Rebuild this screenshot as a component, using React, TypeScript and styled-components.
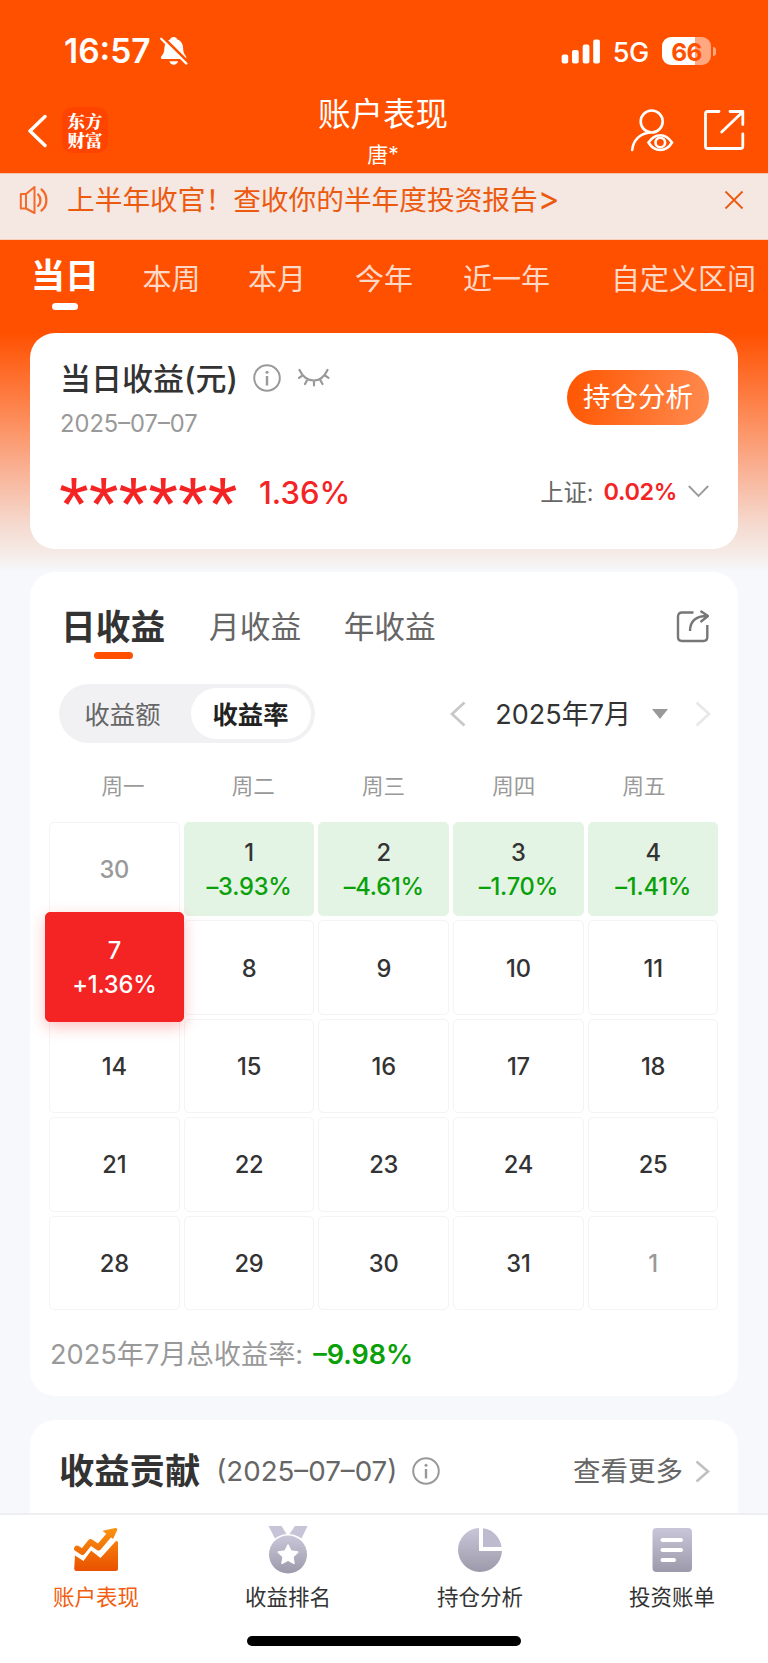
import React from 'react';
import styled, { createGlobalStyle } from 'styled-components';

const Global = createGlobalStyle`
  * { box-sizing: border-box; }
  body {
    margin: 0;
    background: #f6f8fb;
    font-family: Inter, "Noto Sans CJK SC", sans-serif;
    color: #333;
    -webkit-font-smoothing: antialiased;
  }
  svg { display: block; flex: none; }
`;

const Page = styled.div`
  width: 768px;
  height: 1663px;
  overflow: hidden;
  display: flex;
  flex-direction: column;
  background: linear-gradient(180deg, #ff5000 0, #ff5000 333px, #fd8650 410px, #f9b194 470px, #f5dacf 525px, #f5efed 560px, #f6f8fb 571px);
`;

const Label = styled.span<{ $size: number; $weight?: number; $color?: string; $spacing?: number }>`
  display: block;
  padding-top: 2px;
  font-size: ${p => p.$size}px;
  font-weight: ${p => p.$weight ?? 400};
  color: ${p => p.$color ?? 'inherit'};
  letter-spacing: ${p => p.$spacing ?? 0}px;
  line-height: 1;
  white-space: nowrap;
`;

const StatusBar = styled.div`
  height: 100px;
  padding: 2px 52px 0 64px;
  display: flex;
  align-items: center;
  color: #fff;
  flex: none;
`;
const BellOff = styled.svg`
  margin-left: 9px;
`;
const StatusRight = styled.div`
  margin-left: auto;
  display: flex;
  align-items: center;
`;
const Carrier = styled.div`
  margin: 0 13px 0 12px;
  display: flex;
`;
const Battery = styled.div`
  width: 49px;
  height: 28px;
  border-radius: 9px;
  background: linear-gradient(90deg, #fff 33px, #ffa880 33px);
  color: #ff5000;
  display: flex;
  align-items: center;
  justify-content: center;
`;
const BatteryNub = styled.div`
  width: 3px;
  height: 9px;
  margin-left: 2px;
  border-radius: 0 4px 4px 0;
  background: #ffa880;
`;

const Header = styled.header`
  height: 73px;
  display: grid;
  grid-template-columns: 1fr auto 1fr;
  color: #fff;
  flex: none;
`;
const HeaderLeft = styled.div`
  display: flex;
  gap: 15px;
  padding: 7px 0 0 27px;
  align-items: flex-start;
`;
const BackIcon = styled.svg`
  margin-top: 7px;
`;
const Logo = styled.div`
  width: 46px;
  height: 46px;
  padding: 4px 4px 0 5.5px;
  border-radius: 10px;
  background: #ff4400;
  overflow-wrap: anywhere;
  word-break: break-all;
  font: 900 17.5px/19px "Noto Serif CJK SC", "Noto Sans CJK SC", serif;
`;
const HeaderTitle = styled.div`
  display: flex;
  flex-direction: column;
  align-items: center;
  gap: 10px;
  margin: -3px 2px 0 0;
`;
const HeaderRight = styled.div`
  display: flex;
  justify-content: flex-end;
  gap: 29px;
  padding: 8px 23px 0 0;
`;

const Notice = styled.div`
  height: 66.5px;
  padding: 0 24px 13px 18px;
  display: flex;
  align-items: center;
  background: #f5e7e2;
  border-top: 1px solid #f9c5ae;
  border-bottom: 1px solid #f8cfbc;
  color: #ec5a10;
  flex: none;
`;
const NoticeText = styled.div`
  margin-left: 17px;
  flex: 1;
  display: flex;
`;
const Arrow = styled.span`
  font-size: 33px;
  line-height: 0;
`;

const Tabs = styled.nav`
  height: 93px;
  display: flex;
  align-items: flex-start;
  padding: 17px 0 0 31px;
  color: #ffd9c8;
  flex: none;
`;
const Tab = styled.div<{ $gap: number; $active?: boolean }>`
  margin-left: ${p => p.$gap}px;
  padding-top: ${p => (p.$active ? 0 : 6.5)}px;
  display: flex;
  flex-direction: column;
  align-items: center;
  gap: 10.5px;
`;
const Underline = styled.i<{ $w: number; $color: string }>`
  width: ${p => p.$w}px;
  height: 6.5px;
  border-radius: 4px;
  background: ${p => p.$color};
`;

const Card = styled.section<{ $h: number; $mt?: number; $open?: boolean }>`
  height: ${p => p.$h}px;
  margin: ${p => p.$mt ?? 0}px 30px 0;
  border-radius: ${p => (p.$open ? '25px 25px 0 0' : '25px')};
  background: #fff;
  flex: none;
`;
const Row = styled.div<{ $h: number; $pad?: string; $gap?: number }>`
  height: ${p => p.$h}px;
  padding: ${p => p.$pad ?? '0'};
  display: flex;
  align-items: center;
  gap: ${p => p.$gap ?? 0}px;
`;
const Push = styled.div<{ $gap?: number }>`
  margin-left: auto;
  display: flex;
  align-items: center;
  gap: ${p => p.$gap ?? 0}px;
`;
const SummaryTop = styled.div`
  display: flex;
  justify-content: space-between;
  padding: 27px 29px 0 30px;
`;
const TitleLine = styled.div`
  display: flex;
  align-items: center;
  height: 36px;
`;
const Slot = styled.div<{ $l: number; $r: number }>`
  display: flex;
  margin: 0 ${p => p.$r}px 0 ${p => p.$l}px;
`;
const DateLine = styled.div`
  margin-top: 14px;
  display: flex;
`;
const AnalysisButton = styled.button`
  width: 142px;
  height: 55px;
  margin-top: 10px;
  padding: 0;
  border: 0;
  border-radius: 28px;
  background: linear-gradient(100deg, #ff5500, #ff8b50);
  color: #fff;
  font-family: inherit;
`;
const Stars = styled.div`
  width: 200px;
  height: 52px;
  color: #f52424;
  font: 400 76.5px/78px "Liberation Sans", sans-serif;
`;

const CardTabs = styled.div`
  height: 112px;
  padding: 34px 29px 0 31px;
  display: flex;
  align-items: flex-start;
  color: #666;
`;
const CardTab = styled.div<{ $gap: number; $active?: boolean }>`
  margin-left: ${p => p.$gap}px;
  padding-top: ${p => (p.$active ? 2 : 3.5)}px;
  display: flex;
  flex-direction: column;
  align-items: center;
  gap: 7.5px;
`;
const Segment = styled.div`
  width: 256px;
  height: 59px;
  border-radius: 30px;
  padding: 4px;
  background: #f1f1f4;
  display: flex;
  justify-content: space-between;
`;
const SegmentItem = styled.div<{ $active?: boolean }>`
  width: 120px;
  height: 51px;
  padding-right: 1px;
  border-radius: 26px;
  background: ${p => (p.$active ? '#fff' : 'transparent')};
  color: ${p => (p.$active ? '#222' : '#666')};
  display: flex;
  align-items: center;
  justify-content: center;
`;
const Weekdays = styled.div`
  height: 79px;
  padding: 7px 29px 0 28px;
  display: grid;
  grid-template-columns: repeat(5, 1fr);
  align-items: center;
  justify-items: center;
`;
const CalendarGrid = styled.div`
  height: 488px;
  margin: 0 19.500px 0 19px;
  display: grid;
  grid-template-columns: repeat(5, 1fr);
  grid-template-rows: repeat(5, 1fr);
  gap: 4px;
`;
type Kind = 'plain' | 'muted' | 'down' | 'active';
const Cell = styled.div<{ $kind: Kind }>`
  display: flex;
  flex-direction: column;
  align-items: center;
  justify-content: center;
  gap: 10px;
  padding-top: 2px;
  border-radius: 5px;
  font-size: 23.7px;
  font-weight: 500;
  line-height: 24px;
  letter-spacing: -0.2px;
  border: 1px solid ${p => (p.$kind === 'down' ? '#e4f4e4' : '#f4f4f4')};
  background: ${p => (p.$kind === 'down' ? '#e4f4e4' : '#fff')};
  color: ${p => (p.$kind === 'muted' ? '#999' : '#333')};
  ${p =>
    p.$kind === 'active' &&
    `
    margin: -8px -4px -7px;
    position: relative;
    background: #f52424;
    border-color: #f52424;
    color: #fff;
    box-shadow: 0 5px 15px rgba(245, 36, 36, 0.28);
  `}
`;
const Rate = styled.span<{ $kind: Kind }>`
  color: ${p => (p.$kind === 'active' ? '#fff' : '#09a009')};
`;

const TabBar = styled.footer`
  height: 150px;
  border-top: 2px solid #eeeff1;
  background: #fff;
  display: flex;
  flex-direction: column;
  align-items: center;
  flex: none;
`;
const NavItems = styled.div`
  width: 100%;
  height: 121px;
  display: grid;
  grid-template-columns: repeat(4, 1fr);
`;
const NavItem = styled.div<{ $active?: boolean }>`
  display: flex;
  flex-direction: column;
  align-items: center;
  gap: 10px;
  padding-top: 10px;
  color: ${p => (p.$active ? '#f25d10' : '#333')};
`;
const HomeIndicator = styled.div`
  width: 274px;
  height: 10px;
  border-radius: 5px;
  background: #000;
`;

const Info = () => (
  <svg width="28" height="28" viewBox="0 0 28 28" fill="none" stroke="#999" strokeWidth="2">
    <circle cx="14" cy="14" r="12.8" />
    <path d="M14 12v9.5" strokeWidth="2.4" />
    <circle cx="14" cy="8.2" r="1.500" fill="#999" stroke="none" />
  </svg>
);

const Chevron = ({ w, h, color, sw, flip }: { w: number; h: number; color: string; sw: number; flip?: boolean }) => (
  <svg width={w} height={h} viewBox={`0 0 ${w} ${h}`} fill="none" stroke={color} strokeWidth={sw}>
    <path d={flip ? `M1.5 1.5L${w - 2} ${h / 2}L1.5 ${h - 1.5}` : `M${w - 1.5} 1.5L2 ${h / 2}L${w - 1.5} ${h - 1.5}`} />
  </svg>
);

const tabs: [string, number][] = [
  ['本周', 43.5],
  ['本月', 47.5],
  ['今年', 49],
  ['近一年', 50],
  ['自定义区间', 61],
];

const cells: { d: string; k?: Kind; r?: string }[] = [
  { d: '30', k: 'muted' },
  { d: '1', k: 'down', r: '–3.93%' },
  { d: '2', k: 'down', r: '–4.61%' },
  { d: '3', k: 'down', r: '–1.70%' },
  { d: '4', k: 'down', r: '–1.41%' },
  { d: '7', k: 'active', r: '+1.36%' },
  ...['8', '9', '10', '11', '14', '15', '16', '17', '18', '21', '22', '23', '24', '25', '28', '29', '30', '31'].map(d => ({ d })),
  { d: '1', k: 'muted' },
];

export default function App() {
  return (
    <Page>
      <Global />
      <StatusBar>
        <Label $size={33.5} $weight={600}>16:57</Label>
        <BellOff width="28" height="30" viewBox="0 0 28 30">
          <path fill="#fff" d="M13.7 1c1.9 0 3.2 1 3.7 2.6 3.8 1.3 5.6 4.5 5.7 8.5.1 3.8.9 6 2.6 7.800 1.200 1.300.8 3.200-1 3.200H2.800c-1.900 0-2.500-1.900-1.200-3.200 2-2 2.700-4 2.800-7.800.1-4 2-7.200 5.600-8.500C10.500 2 11.800 1 13.700 1zM9.400 25.300h8.600c-.5 2-2.200 3.400-4.300 3.400s-3.800-1.400-4.300-3.400z" />
          <path d="M2.500 0.900L28 26" stroke="#ff5000" strokeWidth="3" />
          <path d="M1.200 2.700L26.400 27.600" stroke="#fff" strokeWidth="2.200" strokeLinecap="round" />
        </BellOff>
        <StatusRight>
          <svg width="40" height="25" viewBox="0 0 40 25" fill="#fff">
            <rect x="0.700" y="15.500" width="6.500" height="9" rx="2" />
            <rect x="11" y="11" width="6.700" height="13.500" rx="2" />
            <rect x="21.700" y="5.500" width="6.700" height="19" rx="2" />
            <rect x="32.200" y="0.500" width="6.700" height="24" rx="2" />
          </svg>
          <Carrier><Label $size={27} $weight={500} $spacing={-0.3}>5G</Label></Carrier>
          <Battery><Label $size={24.5} $weight={700} $spacing={-0.6}>66</Label></Battery>
          <BatteryNub />
        </StatusRight>
      </StatusBar>

      <Header>
        <HeaderLeft>
          <BackIcon width="20" height="34" viewBox="0 0 20 34" fill="none" stroke="#fff" strokeWidth="3.400" strokeLinecap="round" strokeLinejoin="round">
            <path d="M18 2.500L3 17l15 14.500" />
          </BackIcon>
          <Logo>东方财富</Logo>
        </HeaderLeft>
        <HeaderTitle>
          <Label $size={32.5}>账户表现</Label>
          <Label $size={21}>唐*</Label>
        </HeaderTitle>
        <HeaderRight>
          <svg width="44" height="46" viewBox="0 0 44 46" fill="none" stroke="#fff" strokeWidth="2.600" strokeLinecap="round">
            <circle cx="21.700" cy="13.500" r="11" />
            <path d="M2.200 42C3 32.500 9.500 26 18.500 24.800" />
            <path d="M18.500 34.500C21.500 30 25.500 27.200 30.300 27.200S39 30 42 34.500C39 39.500 35 42 30.300 42S21.500 39.500 18.500 34.500z" />
            <circle cx="30.300" cy="34.500" r="4.800" />
          </svg>
          <svg width="42" height="44" viewBox="0 0 42 44" fill="none" stroke="#fff" strokeWidth="2.800" strokeLinecap="round" strokeLinejoin="round">
            <path d="M16 3.500H4.500Q2.500 3.500 2.500 5.500V38.500Q2.500 40.500 4.500 40.500H37.500Q39.800 40.500 39.800 38.500V26" />
            <path d="M27 3.500H39.800V16.500M39 4.500L18.700 24" />
          </svg>
        </HeaderRight>
      </Header>

      <Notice>
        <svg width="32" height="30" viewBox="0 0 32 30" fill="none" stroke="#f36b2a" strokeWidth="2.300" strokeLinecap="round" strokeLinejoin="round">
          <path d="M2.800 9H8L16.500 2V28L8 23.500H2.800zM8 10V22.500" strokeWidth="2" />
          <path d="M20.200 9.500c3 3 3 8.500 0 11.500M23.500 4.500c6.500 5.500 6.500 16 0 21" />
        </svg>
        <NoticeText><Label $size={27.7}>上半年收官！查收你的半年度投资报告<Arrow>&gt;</Arrow></Label></NoticeText>
        <svg width="20" height="20" viewBox="0 0 20 20" stroke="#ec5a10" strokeWidth="1.800">
          <path d="M1.500 1.500l17 17M18.500 1.500l-17 17" />
        </svg>
      </Notice>

      <Tabs>
        <Tab $gap={0} $active>
          <Label $size={34} $weight={700} $color="#fff">当日</Label>
          <Underline $w={26} $color="#fff" />
        </Tab>
        {tabs.map(([t, g]) => (
          <Tab key={t} $gap={g}><Label $size={29}>{t}</Label></Tab>
        ))}
      </Tabs>

      <Card $h={216}>
        <SummaryTop>
          <div>
            <TitleLine>
              <Label $size={31} $weight={500}>当日收益(元)</Label>
              <Slot $l={15} $r={16}><Info /></Slot>
              <svg width="34" height="20" viewBox="0 0 34 20" fill="none" stroke="#999" strokeWidth="2.200" strokeLinecap="round">
                <path d="M2.500 2C6 9.500 11 12.500 17 12.500S27 9.500 30.500 2M5.500 7.500L2 9.800M28 7.500l3.500 2.300M10.500 11.500L8 16M23 11.500L25.500 16M17 13v4.500" />
              </svg>
            </TitleLine>
            <DateLine><Label $size={23.7} $color="#999">2025–07–07</Label></DateLine>
          </div>
          <AnalysisButton><Label $size={27.500}>持仓分析</Label></AnalysisButton>
        </SummaryTop>
        <Row $h={92} $pad="20px 29px 0 29px">
          <Stars>******</Stars>
          <Label $size={31} $weight={500} $color="#f52424">1.36%</Label>
          <Push>
            <Label $size={23.3} $color="#666">上证:</Label>
            <Slot $l={10} $r={11}><Label $size={23.500} $weight={600} $color="#f52424" $spacing={-0.4}>0.02%</Label></Slot>
            <svg width="21" height="13" viewBox="0 0 21 13" fill="none" stroke="#999" strokeWidth="1.800">
              <path d="M0.800 1L10.500 11L20.200 1" />
            </svg>
          </Push>
        </Row>
      </Card>

      <Card $h={824} $mt={23.5}>
        <CardTabs>
          <CardTab $gap={0} $active>
            <Label $size={34.700} $weight={700} $color="#333">日收益</Label>
            <Underline $w={39} $color="#ff5000" />
          </CardTab>
          <CardTab $gap={44}><Label $size={30.700}>月收益</Label></CardTab>
          <CardTab $gap={42.500}><Label $size={30.700}>年收益</Label></CardTab>
          <Push>
            <svg width="33" height="40" viewBox="0 0 33 40" fill="none" stroke="#777" strokeWidth="2.400" strokeLinejoin="round">
              <path d="M17.500 6.500H6Q2 6.500 2 10.500V31Q2 35 6 35H27.500Q31.300 35 31.300 31V19" />
              <path d="M14 25C14 15 20 10 31 10M24.500 5l7.500 5-7.500 6" />
            </svg>
          </Push>
        </CardTabs>
        <Row $h={59} $pad="0 27px 0 29px">
          <Segment>
            <SegmentItem><Label $size={25.300}>收益额</Label></SegmentItem>
            <SegmentItem $active><Label $size={25.300} $weight={700}>收益率</Label></SegmentItem>
          </Segment>
          <Push>
            <Chevron w={16} h={26} color="#c8c8c8" sw={2.8} />
            <Slot $l={29} $r={21}><Label $size={27}>2025年7月</Label></Slot>
            <svg width="16" height="10" viewBox="0 0 16 10"><path d="M0 0h16L8 10z" fill="#999" /></svg>
            <Slot $l={14} $r={13} />
            <Chevron w={16} h={26} color="#e8e8e8" sw={2.8} flip />
          </Push>
        </Row>
        <Weekdays>
          {['周一', '周二', '周三', '周四', '周五'].map(w => (
            <Label key={w} $size={21.5} $color="#999">{w}</Label>
          ))}
        </Weekdays>
        <CalendarGrid>
          {cells.map((c, i) => (
            <Cell key={i} $kind={c.k ?? 'plain'}>
              <span>{c.d}</span>
              {c.r && <Rate $kind={c.k ?? 'plain'}>{c.r}</Rate>}
            </Cell>
          ))}
        </CalendarGrid>
        <Row $h={86} $pad="1px 20px 0" $gap={10}>
          <Label $size={27.2} $color="#999">2025年7月总收益率:</Label>
          <Label $size={27} $weight={600} $color="#09a009">–9.98%</Label>
        </Row>
      </Card>

      <Card $h={93} $mt={24} $open>
        <Row $h={93} $pad="9px 28px 0 29px">
          <Label $size={35.3} $weight={700}>收益贡献</Label>
          <Slot $l={16} $r={15}><Label $size={27.7} $color="#666">(2025–07–07)</Label></Slot>
          <Info />
          <Push $gap={12}>
            <Label $size={27.5} $color="#666">查看更多</Label>
            <Chevron w={15} h={23} color="#c0c0c0" sw={2.6} flip />
          </Push>
        </Row>
      </Card>

      <TabBar>
        <NavItems>
          <NavItem $active>
            <svg width="48" height="50" viewBox="0 0 48 50">
              <defs>
                <linearGradient id="warm" gradientUnits="userSpaceOnUse" x1="0" y1="3" x2="0" y2="46">
                  <stop offset="0" stopColor="#fb930f" />
                  <stop offset="1" stopColor="#e95000" />
                </linearGradient>
                <linearGradient id="cool" x1="0" y1="0" x2="0" y2="1">
                  <stop offset="0" stopColor="#c8c6d8" />
                  <stop offset="1" stopColor="#9c9aaa" />
                </linearGradient>
              </defs>
              <path fill="url(#warm)" d="M3 30.500L11.500 36 19 25.500 28.500 33 43.500 16.500Q46 15 46 18V43.500Q46 46 43.500 46H4.500Q2.200 46 2.200 43.500z" />
              <path fill="none" stroke="#fff" strokeWidth="9.500" strokeLinejoin="round" d="M1 21.500L11 28 19.500 17.500 27 23.500 40 9" />
              <path fill="none" stroke="url(#warm)" strokeWidth="5.800" strokeLinejoin="round" strokeLinecap="round" d="M5 23.500L10.500 27 18.500 17 26.500 22.500 38 9" />
              <path fill="url(#warm)" d="M30.500 5.800L43.500 3Q46 3 45 5.500L41 14z" />
            </svg>
            <Label $size={21.5}>账户表现</Label>
          </NavItem>
          <NavItem>
            <svg width="48" height="50" viewBox="0 0 48 50">
              <path fill="#c6c4d6" d="M4.500 1H17.500L22.500 9Q16 9.500 11 13.500zM43.500 1H31L25.500 9Q32 9.500 37.500 13.500z" />
              <circle cx="24" cy="29.500" r="19" fill="url(#cool)" />
              <path fill="#fff" stroke="#fff" strokeWidth="1.500" strokeLinejoin="round" d="M24 20l3 6.100 6.700 1-4.800 4.700 1.100 6.600-6-3.200-6 3.200 1.100-6.600-4.800-4.700 6.700-1z" />
            </svg>
            <Label $size={21.5}>收益排名</Label>
          </NavItem>
          <NavItem>
            <svg width="48" height="50" viewBox="0 0 48 50">
              <path fill="url(#cool)" d="M23 3A22 22 0 1 0 46 26H23z" />
              <path fill="#bdbbcd" d="M27 3.200A21.500 21.500 0 0 1 45.500 22H27z" />
            </svg>
            <Label $size={21.5}>持仓分析</Label>
          </NavItem>
          <NavItem>
            <svg width="48" height="50" viewBox="0 0 48 50">
              <rect x="4.500" y="3" width="39.500" height="44" rx="4" fill="url(#cool)" />
              <path stroke="#fff" strokeWidth="4" strokeLinecap="round" d="M14.500 15H33M14.500 25H33M14.500 35H26" />
            </svg>
            <Label $size={21.5}>投资账单</Label>
          </NavItem>
        </NavItems>
        <HomeIndicator />
      </TabBar>
    </Page>
  );
}
